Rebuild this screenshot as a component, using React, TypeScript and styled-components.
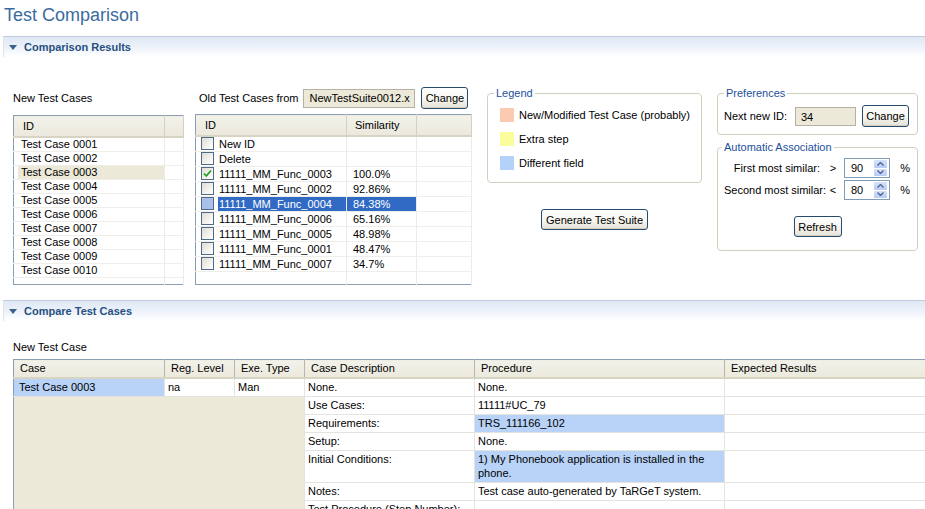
import React from 'react';
import styled, { createGlobalStyle } from 'styled-components';

const Global = createGlobalStyle`
  html, body { margin: 0; padding: 0; background: #fff; overflow: hidden; }
  body { font-family: Tahoma, "Liberation Sans", Arial, sans-serif; font-size: 11px; color: #000; }
  * { box-sizing: border-box; }
`;

const FONT = `Tahoma, "Liberation Sans", Arial, sans-serif`;

const Page = styled.div`
  width: 925px;
  height: 509px;
  overflow: hidden;
  position: relative;
`;

const Title = styled.h1`
  margin: 0;
  height: 36px;
  padding: 4px 0 0 4px;
  font: normal 18px/22px "Liberation Sans", Arial, sans-serif;
  color: #3a6b9f;
`;

const SectionHeader = styled.div`
  height: 21px;
  margin-left: 3px;
  border-top: 1px solid #bccbdd;
  border-left: 1px solid #dbe4f0;
  background: linear-gradient(to bottom, #dfe8f5 0%, #eef3fa 55%, #ffffff 100%);
  display: flex;
  align-items: center;
  padding-left: 5px;
  gap: 7px;
  font: bold 11px ${FONT};
  color: #27507f;
`;

const SectionBody = styled.div<{ $h?: number; $pt: number }>`
  ${p => (p.$h ? `height: ${p.$h}px;` : '')}
  padding: ${p => p.$pt}px 0 0 13px;
`;

const Row = styled.div`
  display: flex;
  align-items: flex-start;
`;

const Column = styled.div<{ $w: number; $ml?: number }>`
  width: ${p => p.$w}px;
  margin-left: ${p => p.$ml ?? 0}px;
  display: flex;
  flex-direction: column;
`;

const LabelRow = styled.div<{ $pl?: number }>`
  height: 22px;
  display: flex;
  align-items: center;
  padding-left: ${p => p.$pl ?? 0}px;
  gap: 5px;
  margin-bottom: 5px;
  white-space: nowrap;
`;

const Plain = styled.span`
  line-height: 13px;
`;

const ReadField = styled.div<{ $w: number }>`
  width: ${p => p.$w}px;
  height: 19px;
  border: 1px solid #b5b2a5;
  background: #ece9d8;
  display: flex;
  align-items: center;
  padding-left: 5px;
  overflow: hidden;
  white-space: nowrap;
`;

const Button = styled.button<{ $w: number; $h?: number }>`
  width: ${p => p.$w}px;
  height: ${p => p.$h ?? 22}px;
  padding: 0;
  font: 11px ${FONT};
  color: #000;
  border: 1px solid #264b6e;
  border-radius: 3px;
  background: linear-gradient(to bottom, #ffffff 0%, #f6f5f0 55%, #e4e1d6 100%);
  box-shadow: inset 0 -1px 0 #d6d0c0;
`;

/* ---------- small list tables ---------- */
const ListTable = styled.table<{ $w: number; $h: number }>`
  width: ${p => p.$w}px;
  height: ${p => p.$h}px;
  border: 1px solid #8a9fb4;
  border-collapse: collapse;
  table-layout: fixed;
  font: 11px ${FONT};
  background: #fff;
`;

const ListTh = styled.th<{ $pl?: number }>`
  height: 21px;
  padding: 0 0 0 ${p => p.$pl ?? 8}px;
  text-align: left;
  font-weight: normal;
  background: linear-gradient(to bottom, #f3f2ea, #ebe9dc);
  border-bottom: 2px solid #d8d4c4;
  border-right: 1px solid #d4d1c2;
  white-space: nowrap;
`;

const ListTd = styled.td<{ $h: number; $pl?: number; $sel?: boolean }>`
  height: ${p => p.$h}px;
  padding: 0 0 0 ${p => p.$pl ?? 0}px;
  border-right: 1px solid #ecebe6;
  border-bottom: 1px solid #efeee9;
  white-space: nowrap;
  vertical-align: middle;
  line-height: ${p => p.$h - 1}px;
  background: ${p => (p.$sel ? '#316ac5' : 'transparent')};
  color: ${p => (p.$sel ? '#fff' : '#000')};
`;

const FillTd = styled.td`
  border-right: 1px solid #ecebe6;
  padding: 0;
`;

const CellLabel = styled.span<{ $bg?: string }>`
  display: block;
  line-height: 13px;
  padding-left: 3px;
  background: ${p => p.$bg ?? 'transparent'};
`;

const CheckCell = styled.div`
  display: flex;
  align-items: center;
  gap: 4px;
  height: 14px;
`;

const Box = styled.span<{ $sel?: boolean }>`
  width: 13px;
  height: 13px;
  flex: none;
  border: 1px solid #50698a;
  background: ${p =>
    p.$sel ? '#a9c1ea' : 'linear-gradient(135deg, #dedcd3 0%, #f4f3ee 60%, #ffffff 100%)'};
  display: flex;
  align-items: center;
  justify-content: center;
`;

const SelLabel = styled.span<{ $sel?: boolean }>`
  flex: 1;
  height: 14px;
  line-height: 14px;
  padding-left: 1px;
  background: ${p => (p.$sel ? '#316ac5' : 'transparent')};
  color: ${p => (p.$sel ? '#fff' : '#000')};
`;

/* ---------- groups ---------- */
const Group = styled.fieldset<{ $h: number; $pt: number; $pl: number }>`
  margin: 0;
  height: ${p => p.$h}px;
  padding: ${p => p.$pt}px 6px 0 ${p => p.$pl}px;
  border: 1px solid #d0d0bf;
  border-radius: 4px;
  min-width: 0;
`;

const GroupTitle = styled.legend<{ $ml: number }>`
  padding: 0 2px;
  margin-left: ${p => p.$ml}px;
  font: 11px/13px ${FONT};
  color: #1d4f9c;
`;

const LegendList = styled.div`
  display: flex;
  flex-direction: column;
  gap: 6px;
`;

const LegendItem = styled.div`
  height: 18px;
  display: flex;
  align-items: center;
  gap: 5px;
`;

const Swatch = styled.span<{ $c: string }>`
  width: 14px;
  height: 14px;
  background: ${p => p.$c};
`;

const CenterRow = styled.div<{ $mt: number }>`
  display: flex;
  justify-content: center;
  margin-top: ${p => p.$mt}px;
`;

const PrefRow = styled.div`
  display: flex;
  align-items: center;
  height: 22px;
`;

const AssocGrid = styled.div`
  display: grid;
  grid-template-columns: 96px 24px 46px 20px;
  grid-auto-rows: 20px;
  row-gap: 2px;
  align-items: center;
`;

const RightLabel = styled.span`
  text-align: right;
  white-space: nowrap;
`;

const Op = styled.span`
  text-align: center;
  padding-left: 2px;
`;

const Pct = styled.span`
  text-align: right;
`;

const Spinner = styled.div`
  height: 20px;
  width: 46px;
  border: 1px solid #7f9db9;
  background: #fff;
  display: flex;
  align-items: center;
  padding: 1px 2px 1px 6px;
`;

const SpinValue = styled.span`
  flex: 1;
`;

const SpinButtons = styled.div`
  width: 13px;
  height: 16px;
  display: flex;
  flex-direction: column;
  gap: 1px;
`;

const SpinBtn = styled.div`
  flex: 1;
  background: linear-gradient(to bottom, #d6e2fb, #b6cbf5);
  border-radius: 1px;
  display: flex;
  align-items: center;
  justify-content: center;
`;

/* ---------- big table ---------- */
const Caption = styled.div`
  line-height: 13px;
  margin-bottom: 5px;
`;

const BigTable = styled.table`
  width: 1000px;
  border-collapse: collapse;
  table-layout: fixed;
  font: 11px ${FONT};
  border-left: 1px solid #8a9fb4;
  border-top: 1px solid #8a9fb4;
`;

const BigTh = styled.th`
  height: 18px;
  padding: 0 0 0 6px;
  text-align: left;
  font-weight: normal;
  background: linear-gradient(to bottom, #f3f2ea, #ebe9dc);
  border-bottom: 2px solid #d8d4c4;
  border-right: 1px solid #b9b6a6;
  white-space: nowrap;
`;

const BigTd = styled.td<{ $bg?: string; $pl?: number }>`
  padding: 1px 4px 2px ${p => p.$pl ?? 3}px;
  line-height: 14px;
  vertical-align: top;
  background: ${p => p.$bg ?? '#fff'};
  border-right: 1px solid #e4e3dd;
  border-bottom: 1px solid #e4e3dd;
`;

const Filler = styled.td`
  background: #ece9d8;
  border-right: 1px solid #e4e3dd;
  padding: 0;
`;

const Triangle = () => (
  <svg width="8" height="5" viewBox="0 0 8 5">
    <path d="M0 0 L8 0 L4 5 Z" fill="#3d618d" />
  </svg>
);

const Check = () => (
  <svg width="9" height="9" viewBox="0 0 9 9">
    <path d="M1 4.5 L3.3 7 L8 1.5" stroke="#21a121" strokeWidth="1.8" fill="none" />
  </svg>
);

const Arrow = ({ up }: { up?: boolean }) => (
  <svg width="7" height="4" viewBox="0 0 7 4">
    <path d={up ? 'M0.5 3.5 L3.5 0.5 L6.5 3.5' : 'M0.5 0.5 L3.5 3.5 L6.5 0.5'} stroke="#4d6185" strokeWidth="1.3" fill="none" />
  </svg>
);

const newCases = Array.from({ length: 10 }, (_, i) => `Test Case ${String(i + 1).padStart(4, '0')}`);

const oldCases: { id: string; sim: string; checked?: boolean; sel?: boolean }[] = [
  { id: 'New ID', sim: '' },
  { id: 'Delete', sim: '' },
  { id: '11111_MM_Func_0003', sim: '100.0%', checked: true },
  { id: '11111_MM_Func_0002', sim: '92.86%' },
  { id: '11111_MM_Func_0004', sim: '84.38%', sel: true },
  { id: '11111_MM_Func_0006', sim: '65.16%' },
  { id: '11111_MM_Func_0005', sim: '48.98%' },
  { id: '11111_MM_Func_0001', sim: '48.47%' },
  { id: '11111_MM_Func_0007', sim: '34.7%' },
];

const details: { label: string; value: string; hl?: boolean }[] = [
  { label: 'Use Cases:', value: '11111#UC_79' },
  { label: 'Requirements:', value: 'TRS_111166_102', hl: true },
  { label: 'Setup:', value: 'None.' },
  { label: 'Initial Conditions:', value: '1) My Phonebook application is installed in the phone.', hl: true },
  { label: 'Notes:', value: 'Test case auto-generated by TaRGeT system.' },
  { label: 'Test Procedure (Step Number):', value: '' },
  { label: '', value: '' },
];

const HL = '#b8d3f7';

const Spin = ({ v }: { v: string }) => (
  <Spinner>
    <SpinValue>{v}</SpinValue>
    <SpinButtons>
      <SpinBtn><Arrow up /></SpinBtn>
      <SpinBtn><Arrow /></SpinBtn>
    </SpinButtons>
  </Spinner>
);

export default function App() {
  return (
    <Page>
      <Global />
      <Title>Test Comparison</Title>

      <SectionHeader>
        <Triangle />
        Comparison Results
      </SectionHeader>
      <SectionBody $h={243} $pt={30}>
        <Row>
          <Column $w={171}>
            <LabelRow>
              <Plain>New Test Cases</Plain>
            </LabelRow>
            <ListTable $w={171} $h={170} style={{ marginTop: 1 }}>
              <colgroup>
                <col style={{ width: 151 }} />
                <col />
              </colgroup>
              <thead>
                <tr>
                  <ListTh $pl={9}>ID</ListTh>
                  <ListTh />
                </tr>
              </thead>
              <tbody>
                {newCases.map((c, i) => (
                  <tr key={c}>
                    <ListTd $h={14} $pl={4}>
                      <CellLabel $bg={i === 2 ? '#ece9d8' : undefined}>{c}</CellLabel>
                    </ListTd>
                    <ListTd $h={14} />
                  </tr>
                ))}
                <tr>
                  <FillTd />
                  <FillTd />
                </tr>
              </tbody>
            </ListTable>
          </Column>

          <Column $w={277} $ml={11}>
            <LabelRow $pl={4}>
              <Plain>Old Test Cases from</Plain>
              <ReadField $w={112}>NewTestSuite0012.x</ReadField>
              <Button $w={47} style={{ marginLeft: 1 }}>Change</Button>
            </LabelRow>
            <ListTable $w={277} $h={171}>
              <colgroup>
                <col style={{ width: 151 }} />
                <col style={{ width: 70 }} />
                <col />
              </colgroup>
              <thead>
                <tr>
                  <ListTh $pl={9}>ID</ListTh>
                  <ListTh $pl={8}>Similarity</ListTh>
                  <ListTh />
                </tr>
              </thead>
              <tbody>
                {oldCases.map(o => (
                  <tr key={o.id}>
                    <ListTd $h={15} $pl={5}>
                      <CheckCell>
                        <Box $sel={o.sel}>{o.checked && <Check />}</Box>
                        <SelLabel $sel={o.sel}>{o.id}</SelLabel>
                      </CheckCell>
                    </ListTd>
                    <ListTd $h={15} $pl={6} $sel={o.sel}>{o.sim}</ListTd>
                    <ListTd $h={15} />
                  </tr>
                ))}
                <tr>
                  <FillTd />
                  <FillTd />
                  <FillTd />
                </tr>
              </tbody>
            </ListTable>
          </Column>

          <Column $w={215} $ml={15}>
            <Group $h={96} $pt={6} $pl={12}>
              <GroupTitle $ml={-6}>Legend</GroupTitle>
              <LegendList>
                <LegendItem>
                  <Swatch $c="#fbcbb1" />
                  New/Modified Test Case (probably)
                </LegendItem>
                <LegendItem>
                  <Swatch $c="#fbfd9b" />
                  Extra step
                </LegendItem>
                <LegendItem>
                  <Swatch $c="#b3d1f9" />
                  Different field
                </LegendItem>
              </LegendList>
            </Group>
            <CenterRow $mt={26}>
              <Button $w={107} $h={21}>Generate Test Suite</Button>
            </CenterRow>
          </Column>

          <Column $w={201} $ml={15}>
            <Group $h={48} $pt={5} $pl={6}>
              <GroupTitle $ml={0}>Preferences</GroupTitle>
              <PrefRow>
                <span style={{ width: 71 }}>Next new ID:</span>
                <ReadField $w={61} style={{ marginTop: 1 }}>34</ReadField>
                <Button $w={47} style={{ marginLeft: 6 }}>Change</Button>
              </PrefRow>
            </Group>
            <Group $h={110} $pt={4} $pl={6} style={{ marginTop: 6 }}>
              <GroupTitle $ml={-2}>Automatic Association</GroupTitle>
              <AssocGrid>
                <RightLabel>First most similar:</RightLabel>
                <Op>&gt;</Op>
                <Spin v="90" />
                <Pct>%</Pct>
                <RightLabel>Second most similar:</RightLabel>
                <Op>&lt;</Op>
                <Spin v="80" />
                <Pct>%</Pct>
              </AssocGrid>
              <CenterRow $mt={16}>
                <Button $w={48} $h={21}>Refresh</Button>
              </CenterRow>
            </Group>
          </Column>
        </Row>
      </SectionBody>

      <SectionHeader>
        <Triangle />
        Compare Test Cases
      </SectionHeader>
      <SectionBody $pt={20}>
        <Caption>New Test Case</Caption>
        <BigTable>
          <colgroup>
            <col style={{ width: 151 }} />
            <col style={{ width: 70 }} />
            <col style={{ width: 70 }} />
            <col style={{ width: 170 }} />
            <col style={{ width: 250 }} />
            <col />
          </colgroup>
          <thead>
            <tr>
              <BigTh>Case</BigTh>
              <BigTh>Reg. Level</BigTh>
              <BigTh>Exe. Type</BigTh>
              <BigTh>Case Description</BigTh>
              <BigTh>Procedure</BigTh>
              <BigTh>Expected Results</BigTh>
            </tr>
          </thead>
          <tbody>
            <tr>
              <BigTd $bg={HL} $pl={5}>Test Case 0003</BigTd>
              <BigTd>na</BigTd>
              <BigTd>Man</BigTd>
              <BigTd>None.</BigTd>
              <BigTd>None.</BigTd>
              <BigTd />
            </tr>
            {details.map((d, i) => (
              <tr key={i}>
                {i === 0 && <Filler colSpan={3} rowSpan={details.length} />}
                <BigTd>{d.label}</BigTd>
                <BigTd $bg={d.hl ? HL : undefined}>{d.value}</BigTd>
                <BigTd />
              </tr>
            ))}
          </tbody>
        </BigTable>
      </SectionBody>
    </Page>
  );
}
